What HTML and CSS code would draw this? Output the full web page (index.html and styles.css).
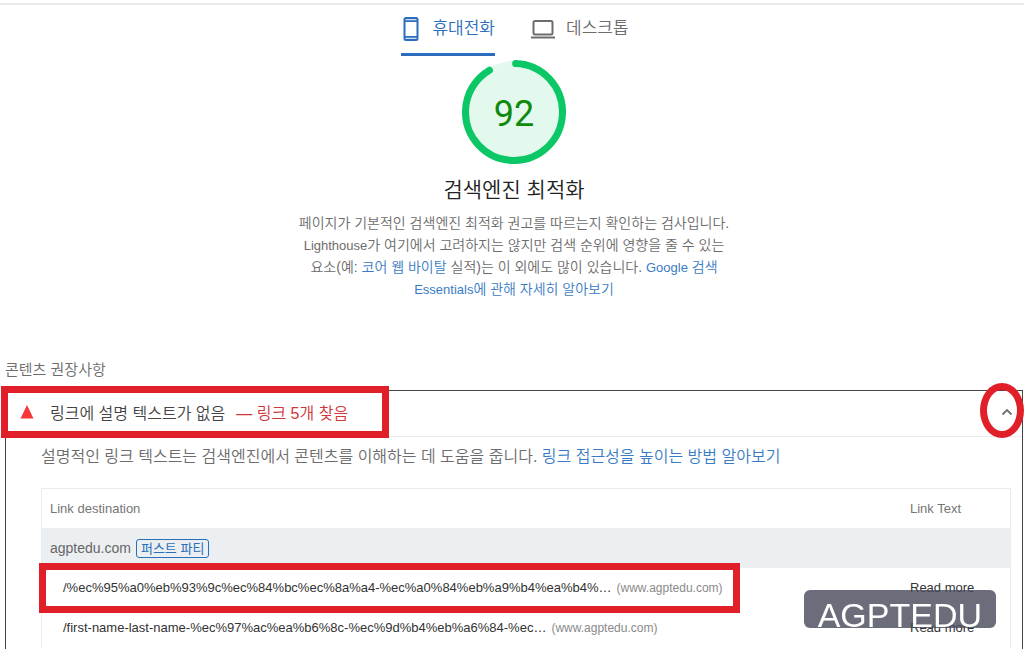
FILE: index.html
```html
<!DOCTYPE html>
<html lang="ko">
<head>
<meta charset="utf-8">
<title>검색엔진 최적화</title>
<link rel="stylesheet" href="styles.css">
</head>
<body>
<div class="page">
  <nav class="tabs" role="tablist">
    <button class="tab tab-active" role="tab" aria-selected="true">
      <svg class="tab-icon" width="20" height="26" viewBox="0 0 20 26" aria-hidden="true">
        <path fill="currentColor" fill-rule="evenodd" d="M5 1h10a2.500 2.500 0 0 1 2.500 2.500v19a2.500 2.500 0 0 1-2.500 2.500H5a2.500 2.500 0 0 1-2.500-2.500v-19A2.500 2.500 0 0 1 5 1zM4.500 3.200v1h11v-1zM4.500 6v14h11V6zM4.500 21.800v1h11v-1z"/>
      </svg>
      <span>휴대전화</span>
    </button>
    <button class="tab" role="tab" aria-selected="false">
      <svg class="tab-icon" width="24" height="26" viewBox="0 0 24 26" aria-hidden="true">
        <rect x="2.500" y="5" width="19" height="13.500" rx="1.500" fill="none" stroke="currentColor" stroke-width="2"/>
        <path d="M0 21.500h24" stroke="currentColor" stroke-width="2"/>
      </svg>
      <span>데스크톱</span>
    </button>
  </nav>

  <header class="summary">
    <div class="gauge">
      <svg class="gauge-ring" width="104" height="104" viewBox="0 0 104 104" aria-hidden="true">
        <circle cx="52" cy="52" r="51" fill="#e4f9ee"/>
        <circle cx="52" cy="52" r="48.500" fill="none" stroke="#0cc765" stroke-width="7" stroke-linecap="round" pathLength="100" stroke-dasharray="91 100" transform="rotate(-88 52 52)"/>
      </svg>
      <span class="gauge-score">92</span>
    </div>
    <h1 class="title">검색엔진 최적화</h1>
    <p class="intro">페이지가 기본적인 검색엔진 최적화 권고를 따르는지 확인하는 검사입니다.<br><span class="latin">Lighthouse</span>가 여기에서 고려하지는 않지만 검색 순위에 영향을 줄 수 있는<br>요소(예: <a href="#vitals">코어 웹 바이탈</a> 실적)는 이 외에도 많이 있습니다. <a href="#essentials"><span class="latin">Google</span> 검색<br><span class="latin">Essentials</span>에 관해 자세히 알아보기</a></p>
  </header>

  <h2 class="group-title">콘텐츠 권장사항</h2>
  <section class="audit">
    <button class="audit-head" aria-expanded="true">
      <svg class="fail" width="14" height="14" viewBox="0 0 14 14" aria-hidden="true"><path d="M7 0l6.500 13.500H.5z" fill="#f6373a"/></svg>
      <span class="audit-title">링크에 설명 텍스트가 없음</span>
      <span class="audit-count">— 링크 5개 찾음</span>
      <svg class="chevron" width="12" height="8" viewBox="0 0 12 8" aria-hidden="true"><path d="M1.500 6.500L6 2l4.500 4.500" fill="none" stroke="#707070" stroke-width="1.800"/></svg>
      <span class="mark-box mark-head"></span>
      <span class="mark-ring"></span>
    </button>
    <div class="audit-body">
      <p class="description">설명적인 링크 텍스트는 검색엔진에서 콘텐츠를 이해하는 데 도움을 줍니다. <a href="#learn">링크 접근성을 높이는 방법 알아보기</a></p>
      <table class="links">
        <thead>
          <tr><th scope="col">Link destination</th><th scope="col" class="col-text">Link Text</th></tr>
        </thead>
        <tbody>
          <tr class="party"><td colspan="2"><div class="party-cell">agptedu.com <span class="badge">퍼스트 파티</span></div></td></tr>
          <tr><td class="url"><a href="#link1">/%ec%95%a0%eb%93%9c%ec%84%bc%ec%8a%a4-%ec%a0%84%eb%a9%b4%ea%b4%…</a><span class="host">(www.agptedu.com)</span><span class="mark-box mark-row"></span></td><td>Read more</td></tr>
          <tr><td class="url"><a href="#link2">/first-name-last-name-%ec%97%ac%ea%b6%8c-%ec%9d%b4%eb%a6%84-%ec…</a><span class="host">(www.agptedu.com)</span></td><td>Read more</td></tr>
        </tbody>
      </table>
    </div>
  </section>
</div>
<div class="watermark">AGPTEDU</div>
</body>
</html>
```

FILE: styles.css
```css
* {
  box-sizing: border-box;
}

body {
  margin: 0;
  background: #fff;
  color: #6c6c6c;
  font-family: "Liberation Sans", "Noto Sans CJK KR", sans-serif;
  font-weight: 350;
}

a {
  color: #3a7cc4;
  text-decoration: none;
}

button {
  margin: 0;
  border: 0;
  background: none;
  font: inherit;
  color: inherit;
}

.page {
  display: flex;
  flex-direction: column;
  min-height: 100vh;
  padding: 3px 1px 0 5px;
  overflow: hidden;
}

.tabs {
  display: flex;
  justify-content: center;
  gap: 36px;
  margin: 0 -1px 0 -5px;
  padding-left: 6px;
  border-top: 2px solid #ebebeb;
}

.tab {
  display: flex;
  align-items: center;
  gap: 11px;
  height: 51px;
  padding: 0;
  border-bottom: 3px solid transparent;
  font-size: 17px;
  line-height: 24px;
}

.tab-active {
  color: #2a6dbd;
  border-bottom-color: #2a6dbd;
}

.tab-icon {
  flex: none;
}

.summary {
  display: flex;
  flex-direction: column;
  align-items: center;
  padding-top: 4px;
}

.gauge {
  display: grid;
  place-items: center;
}

.gauge-ring,
.gauge-score {
  grid-area: 1 / 1;
}

.gauge-score {
  padding-top: 3px;
  color: #108a0d;
  font: 400 36px/40px Roboto, sans-serif;
}

.title {
  margin: 11px 0 0;
  color: #222;
  font-size: 21px;
  font-weight: 350;
  line-height: 30px;
}

.intro {
  margin: 7px 0 0;
  font-size: 14px;
  line-height: 22px;
  text-align: center;
}

.latin {
  font-size: 13px;
  line-height: 1;
}

.group-title {
  margin: 60px 0 0;
  font-size: 15px;
  font-weight: 350;
  line-height: 20px;
}

.audit {
  flex: 1;
  margin-top: 10px;
  border: 1px solid #444;
  border-bottom: 0;
}

.audit-head {
  position: relative;
  display: flex;
  align-items: center;
  width: 100%;
  height: 46px;
  padding: 0 9px 4px 14px;
  border-bottom: 1px solid #ebebeb;
  font-size: 16px;
  color: #444;
  text-align: left;
}

.audit-title {
  margin-left: 16px;
}

.audit-count {
  margin-left: 11px;
  color: #d0353a;
}

.chevron {
  margin-left: auto;
}

.audit-body {
  padding: 8px 11px 0 35px;
}

.description {
  margin: 0;
  font-size: 16px;
  line-height: 24px;
}

.links {
  width: 100%;
  margin-top: 19px;
  border: 1px solid #ebebeb;
  border-bottom: 0;
  border-spacing: 0;
  font-size: 13px;
  font-weight: 400;
  color: #333;
}

.links th,
.links td {
  height: 40px;
  padding: 0 8px 2px;
  text-align: left;
}

.links th {
  height: 39px;
  padding-bottom: 0;
  color: #757575;
  font-weight: 400;
}

.links .col-text {
  width: 108px;
}

.links .party td {
  padding-bottom: 0;
  background: #eceff2;
  color: #666;
  font-size: 14px;
}

.party-cell {
  display: flex;
  align-items: center;
  gap: 5px;
}

.badge {
  padding: 0 4px;
  border: 1px solid #2a70b8;
  border-radius: 3px;
  color: #2a70b8;
  font-size: 13px;
  line-height: 17px;
}

.links .url {
  position: relative;
  padding-left: 21px;
}

.url a {
  color: #333;
}

.host {
  margin-left: 5px;
  color: #8a8a8a;
  font-size: 12px;
}

.mark-box {
  position: absolute;
  border: 7px solid #e11f28;
}

.mark-head {
  top: -5px;
  left: -5px;
  width: 388px;
  height: 52px;
}

.mark-row {
  top: -5px;
  left: -3px;
  width: 701px;
  height: 50px;
}

.mark-ring {
  position: absolute;
  top: -8px;
  right: -2px;
  width: 44px;
  height: 55px;
  border: 7px solid #e11f28;
  border-radius: 50%;
}

.watermark {
  position: fixed;
  right: 28px;
  bottom: 21px;
  height: 38px;
  padding: 0 14px;
  overflow: hidden;
  border-radius: 6px;
  background: rgba(70, 72, 90, 0.8);
  color: #fff;
  font-size: 34px;
  font-weight: 400;
  line-height: 50px;
}
```
